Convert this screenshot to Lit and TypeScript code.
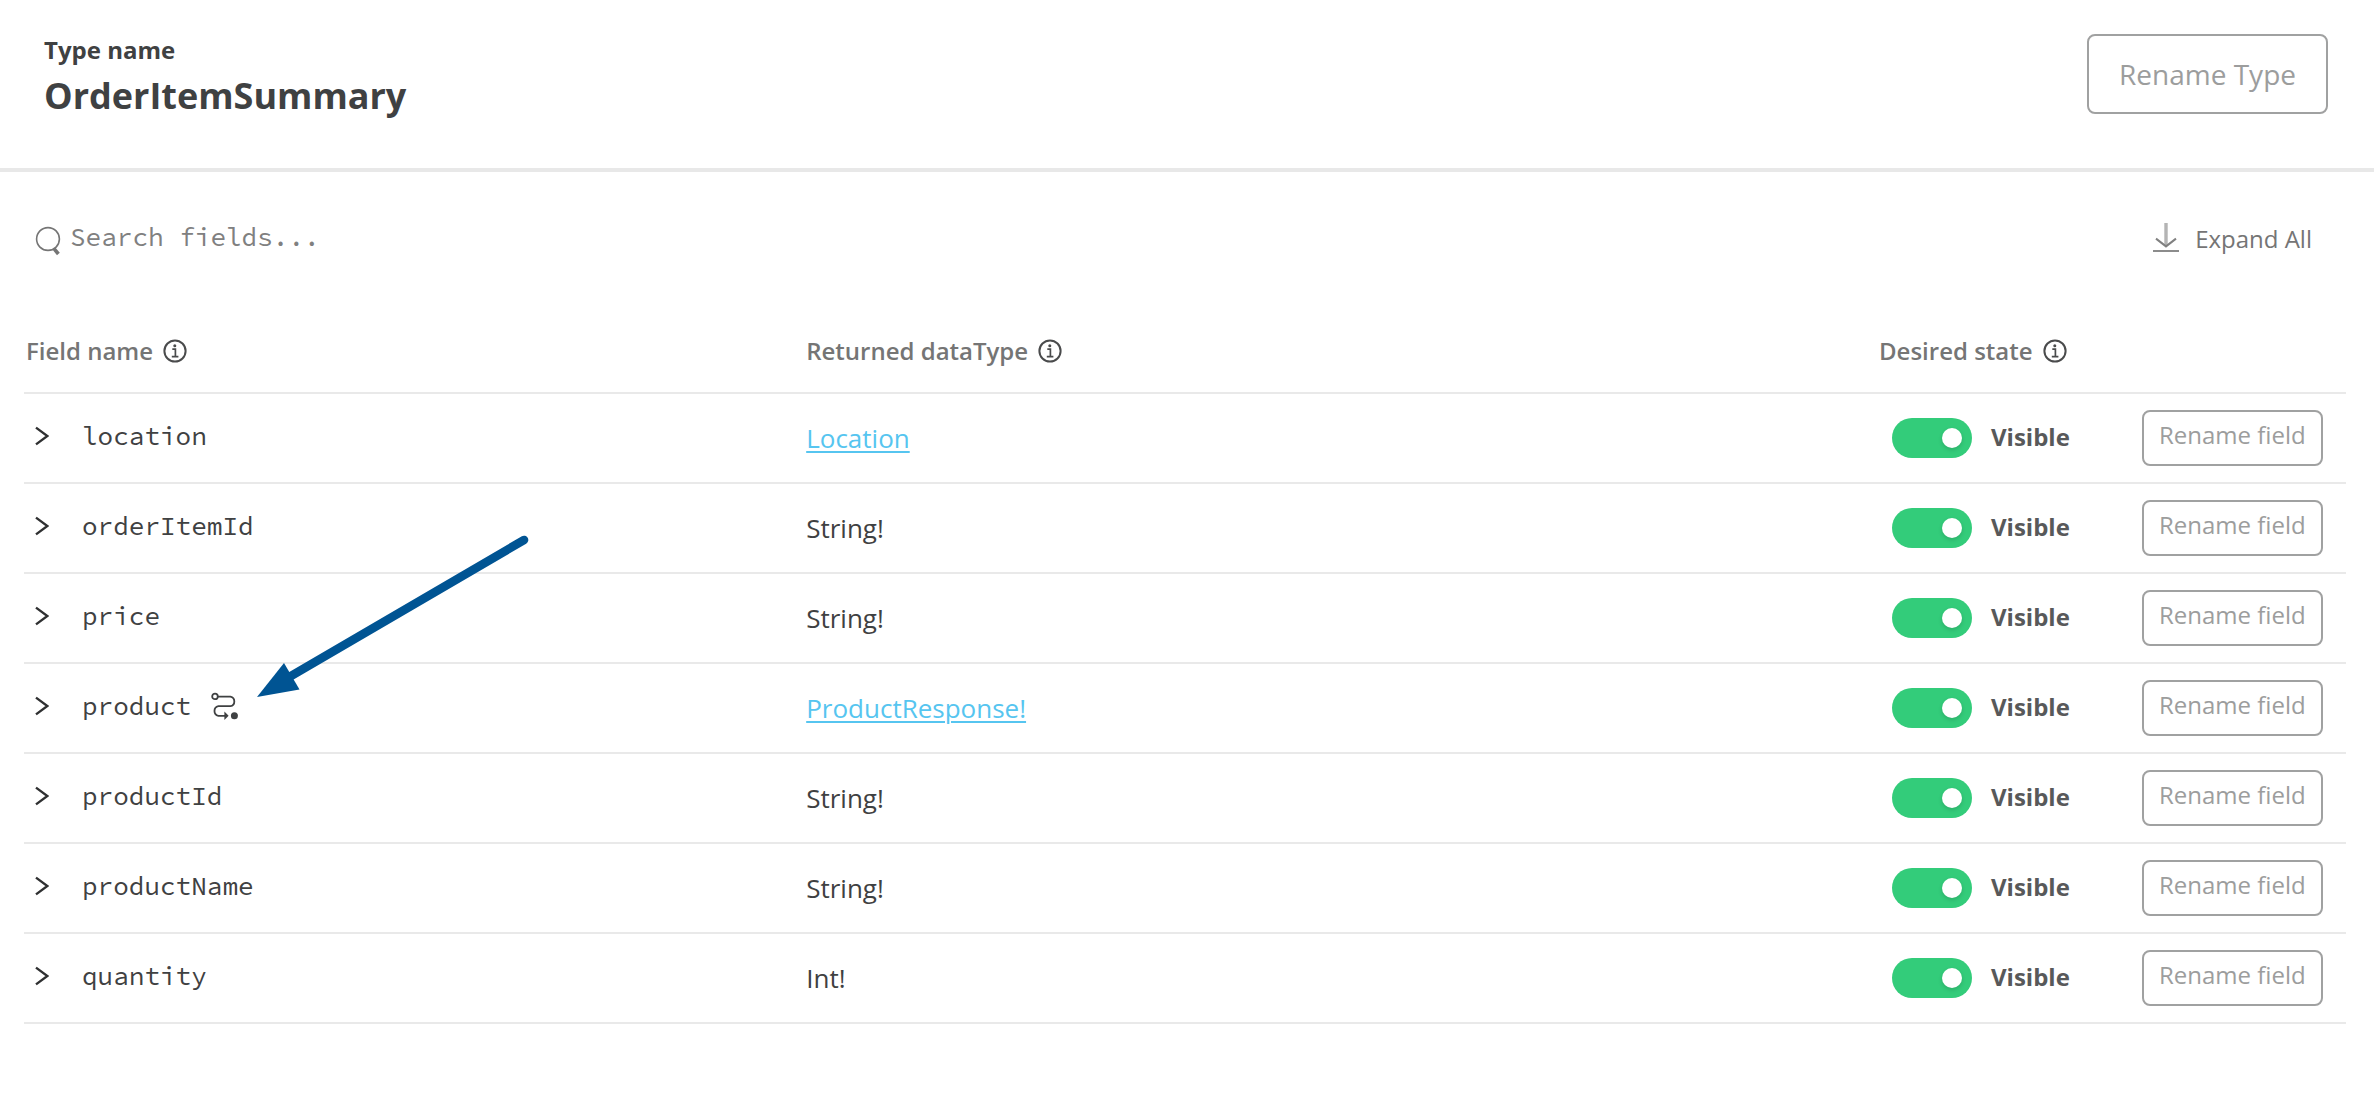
import { LitElement, html, css, svg, nothing } from "lit";
import { customElement, state } from "lit/decorators.js";

interface Field {
  name: string;
  type: string;
  linked?: boolean;
  routed?: boolean;
}

const FIELDS: Field[] = [
  { name: "location", type: "Location", linked: true },
  { name: "orderItemId", type: "String!" },
  { name: "price", type: "String!" },
  { name: "product", type: "ProductResponse!", linked: true, routed: true },
  { name: "productId", type: "String!" },
  { name: "productName", type: "String!" },
  { name: "quantity", type: "Int!" },
];

const infoIcon = html`<svg class="info" viewBox="0 0 24 24" aria-hidden="true">
  <circle cx="12" cy="12" r="10.6" fill="none" stroke="currentColor" stroke-width="2" />
  <circle cx="11.8" cy="6.8" r="1.5" fill="currentColor" />
  <path d="M9.3 10.2H12.4V17.4M8.8 17.6H15.4" fill="none" stroke="currentColor" stroke-width="1.7" />
</svg>`;

const searchIcon = html`<svg class="search-icon" viewBox="0 0 28 30" aria-hidden="true">
  <circle cx="14" cy="13" r="11.4" fill="none" stroke="currentColor" stroke-width="1.6" />
  <path d="M20 22.6L24.4 28" fill="none" stroke="currentColor" stroke-width="3.6" />
</svg>`;

const downloadIcon = html`<svg class="download-icon" viewBox="0 0 26 30" aria-hidden="true">
  <path d="M13 0V23" fill="none" stroke="#b4b4b4" stroke-width="3.4" />
  <path d="M3 15.6L13 23.4L23 15.6" fill="none" stroke="#808080" stroke-width="2" />
  <path d="M0 28H26" fill="none" stroke="#8c8c8c" stroke-width="2" />
</svg>`;

const chevronIcon = html`<svg class="chevron-icon" viewBox="0 0 14 20" aria-hidden="true">
  <path d="M1 1.6L12.4 10L1 18.4" fill="none" stroke="currentColor" stroke-width="2.4" />
</svg>`;

const routeIcon = html`<svg class="route-icon" viewBox="0 0 28 28" role="img" aria-label="Routed field">
  <g fill="none" stroke="currentColor" stroke-width="1.8">
    <circle cx="4" cy="4.4" r="2.8" />
    <path d="M7 4.6H19.4A4.9 4.9 0 0 1 19.4 14.2H7.4A4.9 4.9 0 0 0 7.4 23.8H14" />
  </g>
  <path d="M13.4 19.6V28L17.6 23.8Z" fill="currentColor" />
  <circle cx="23.4" cy="23.8" r="3.5" fill="currentColor" />
</svg>`;

const pointer = html`<svg class="pointer" viewBox="0 0 274 166" aria-hidden="true">
  ${svg`<path d="M34 142L267 6" fill="none" stroke="#005493" stroke-width="8.6" stroke-linecap="round" />
  <path d="M0 163L27 129L42.5 155.5Z" fill="#005493" />`}
</svg>`;

@customElement("app-root")
export class AppRoot extends LitElement {
  @state() private hidden_ = new Set<string>();

  static styles = css`
    :host {
      display: block;
      min-height: 100vh;
      background: #fff;
      color: #3f4142;
      font-family: "Open Sans", "Noto Sans", sans-serif;
      font-size: 26px;
      line-height: 36px;
    }
    * {
      box-sizing: border-box;
    }
    button,
    input {
      font: inherit;
      color: inherit;
      margin: 0;
      padding: 0;
      border: 0;
      background: none;
    }
    svg {
      display: block;
      flex: none;
    }
    .header {
      display: flex;
      justify-content: space-between;
      align-items: flex-start;
      padding: 34px 46px 42px 44px;
      border-bottom: 4px solid #e8e8e8;
    }
    .label {
      margin: 0;
      font-size: 24px;
      line-height: 32px;
      font-weight: 700;
    }
    .title {
      margin: 0;
      font-size: 36px;
      line-height: 60px;
      font-weight: 700;
    }
    .outline {
      border: 2px solid #a0a1a1;
      border-radius: 8px;
      color: #9c9d9d;
      white-space: nowrap;
    }
    .rename-type {
      height: 80px;
      padding: 0 30px;
      font-size: 28px;
    }
    .toolbar {
      display: flex;
      justify-content: space-between;
      align-items: center;
      padding: 46px 62px 0 34px;
      color: #757575;
    }
    .search {
      display: flex;
      flex: 1;
      align-items: center;
      gap: 8px;
    }
    .search-icon {
      width: 28px;
      height: 30px;
      margin-top: 6px;
    }
    .search-input {
      flex: 1;
      max-width: 600px;
      height: 40px;
      padding-bottom: 4px;
      outline: none;
      font-family: "Source Code Pro", "Noto Sans Mono", "DejaVu Sans Mono", monospace;
    }
    .search-input::placeholder {
      color: #808080;
      opacity: 1;
    }
    .expand {
      display: flex;
      align-items: center;
      gap: 16px;
      font-size: 24px;
    }
    .expand-text {
      padding-top: 2px;
    }
    .download-icon {
      width: 26px;
      height: 30px;
    }
    .fields {
      width: calc(100% - 52px);
      margin: 65px 28px 0 24px;
      border-collapse: collapse;
      table-layout: fixed;
    }
    .col-name {
      width: 33.6%;
    }
    .col-state {
      width: 263px;
    }
    .col-action {
      width: 206px;
    }
    th,
    td {
      padding: 0 2px;
      text-align: left;
      border-bottom: 2px solid #e9e9e9;
      white-space: nowrap;
    }
    th {
      height: 70px;
      padding-bottom: 14px;
      color: #757575;
      font-size: 24px;
      font-weight: 600;
    }
    td {
      height: 90px;
    }
    .head {
      display: flex;
      align-items: center;
      gap: 10px;
    }
    .info {
      width: 24px;
      height: 24px;
      color: #4a4b4c;
    }
    .name {
      position: relative;
      display: flex;
      align-items: center;
      padding: 0 0 4px 9px;
    }
    .chevron {
      display: flex;
      margin-right: 33px;
      color: #2f3031;
      cursor: pointer;
    }
    .chevron-icon {
      width: 14px;
      height: 20px;
    }
    .mono {
      font-family: "Source Code Pro", "Noto Sans Mono", "DejaVu Sans Mono", monospace;
    }
    .route-icon {
      width: 28px;
      height: 28px;
      margin-left: 20px;
    }
    .pointer {
      position: absolute;
      left: 231px;
      bottom: 28px;
      width: 274px;
      height: 166px;
      pointer-events: none;
    }
    .link {
      color: #56c5f0;
      text-decoration: underline;
      text-decoration-thickness: 2px;
      text-underline-offset: 3px;
    }
    .toggle {
      display: flex;
      align-items: center;
      gap: 19px;
      padding-left: 13px;
      font-size: 24px;
      font-weight: 700;
      color: #58595a;
    }
    .toggle-text {
      padding-bottom: 2px;
    }
    .switch {
      appearance: none;
      display: flex;
      justify-content: flex-start;
      align-items: center;
      width: 80px;
      height: 40px;
      padding: 0 10px;
      border-radius: 20px;
      background: #a0a1a1;
      cursor: pointer;
    }
    .switch::before {
      content: "";
      width: 20px;
      height: 20px;
      border-radius: 50%;
      background: #fff;
      box-shadow: 0 2px 4px rgba(0, 0, 0, 0.15);
    }
    .switch:checked {
      justify-content: flex-end;
      background: #33cc7a;
    }
    .rename-field {
      display: block;
      height: 56px;
      padding: 0 15px 6px;
      font-size: 24px;
    }
  `;

  private toggle(name: string) {
    const next = new Set(this.hidden_);
    next.has(name) ? next.delete(name) : next.add(name);
    this.hidden_ = next;
  }

  private row(f: Field) {
    const visible = !this.hidden_.has(f.name);
    return html`<tr>
      <td>
        <div class="name">
          <button class="chevron" aria-label="Expand ${f.name}">${chevronIcon}</button>
          <span class="mono">${f.name}</span>
          ${f.routed ? html`${routeIcon}${pointer}` : nothing}
        </div>
      </td>
      <td>${f.linked ? html`<a class="link" href="#${f.name}">${f.type}</a>` : f.type}</td>
      <td>
        <label class="toggle">
          <input class="switch" type="checkbox" .checked=${visible} @change=${() => this.toggle(f.name)} />
          <span class="toggle-text">${visible ? "Visible" : "Hidden"}</span>
        </label>
      </td>
      <td><button class="outline rename-field">Rename field</button></td>
    </tr>`;
  }

  render() {
    return html`
      <header class="header">
        <div>
          <p class="label">Type name</p>
          <h1 class="title">OrderItemSummary</h1>
        </div>
        <button class="outline rename-type">Rename Type</button>
      </header>
      <div class="toolbar">
        <label class="search">
          ${searchIcon}
          <input class="search-input" type="search" aria-label="Search fields" placeholder="Search fields..." />
        </label>
        <button class="expand">${downloadIcon}<span class="expand-text">Expand All</span></button>
      </div>
      <table class="fields">
        <colgroup>
          <col class="col-name" />
          <col />
          <col class="col-state" />
          <col class="col-action" />
        </colgroup>
        <thead>
          <tr>
            <th scope="col"><span class="head">Field name ${infoIcon}</span></th>
            <th scope="col"><span class="head">Returned dataType ${infoIcon}</span></th>
            <th scope="col"><span class="head">Desired state ${infoIcon}</span></th>
            <th></th>
          </tr>
        </thead>
        <tbody>
          ${FIELDS.map((f) => this.row(f))}
        </tbody>
      </table>
    `;
  }
}
